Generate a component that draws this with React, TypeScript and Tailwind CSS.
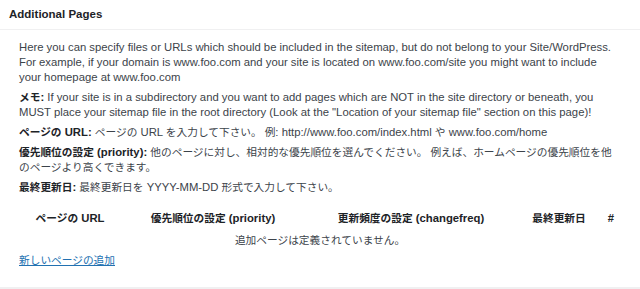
import React from "react";

const J = ({ children }: { children: React.ReactNode }) => (
  <span className="text-[10.7px]">{children}</span>
);

export default function App() {
  return (
    <div
      className="w-[640px] h-[289px] bg-[#f0f0f1] text-[11.3px] text-[#3c434a]"
      style={{ fontFamily: '"Liberation Sans", "Noto Sans CJK JP", sans-serif' }}
    >
      <div className="bg-white h-[287px] flex flex-col">
        <div className="h-[30px] border-b border-[#f0f0f1] px-[9px] flex items-center">
          <h2 className="font-bold text-[11.5px] text-[#1d2327] leading-none">Additional Pages</h2>
        </div>
        <div className="px-[19px] pt-[10px] leading-[15px] whitespace-nowrap">
          <p>
            Here you can specify files or URLs which should be included in the sitemap, but do not belong to your Site/WordPress.
            <br />
            For example, if your domain is www.foo.com and your site is located on www.foo.com/site you might want to include
            <br />
            your homepage at www.foo.com
          </p>
          <p className="mt-[5px]">
            <b className="text-[#1d2327]"><J>メモ</J>:</b> If your site is in a subdirectory and you want to add pages which are NOT in the site directory or beneath, you
            <br />
            MUST place your sitemap file in the root directory (Look at the "Location of your sitemap file" section on this page)!
          </p>
          <p className="mt-[5px]">
            <b className="text-[#1d2327]"><J>ページの</J> URL:</b> <J>ページの</J> URL <J>を入力して下さい。 例</J>: http://www.foo.com/index.html <J>や</J> www.foo.com/home
          </p>
          <p className="mt-[5px]">
            <b className="text-[#1d2327]"><J>優先順位の設定</J> (priority):</b> <J>他のページに対し、相対的な優先順位を選んでください。 例えば、ホームページの優先順位を他</J>
            <br />
            <J>のページより高くできます。</J>
          </p>
          <p className="mt-[5px]">
            <b className="text-[#1d2327]"><J>最終更新日</J>:</b> <J>最終更新日を</J> YYYY-MM-DD <J>形式で入力して下さい。</J>
          </p>
          <table className="table-fixed w-[602px] mt-[12px] border-collapse">
            <colgroup>
              <col className="w-[102px]" />
              <col className="w-[184px]" />
              <col className="w-[212px]" />
              <col className="w-[84px]" />
              <col className="w-[20px]" />
            </colgroup>
            <thead>
              <tr className="h-[23px] font-bold text-[#1d2327]">
                <th className="font-bold"><J>ページの</J> URL</th>
                <th className="font-bold"><J>優先順位の設定</J> (priority)</th>
                <th className="font-bold"><J>更新頻度の設定</J> (changefreq)</th>
                <th className="font-bold"><J>最終更新日</J></th>
                <th className="font-bold">#</th>
              </tr>
            </thead>
            <tbody>
              <tr className="h-[21px]">
                <td colSpan={5} className="text-center"><J>追加ページは定義されていません。</J></td>
              </tr>
            </tbody>
          </table>
          <div className="mt-[2px]">
            <a href="#" className="text-[#2271b1] underline"><J>新しいページの追加</J></a>
          </div>
        </div>
      </div>
    </div>
  );
}
